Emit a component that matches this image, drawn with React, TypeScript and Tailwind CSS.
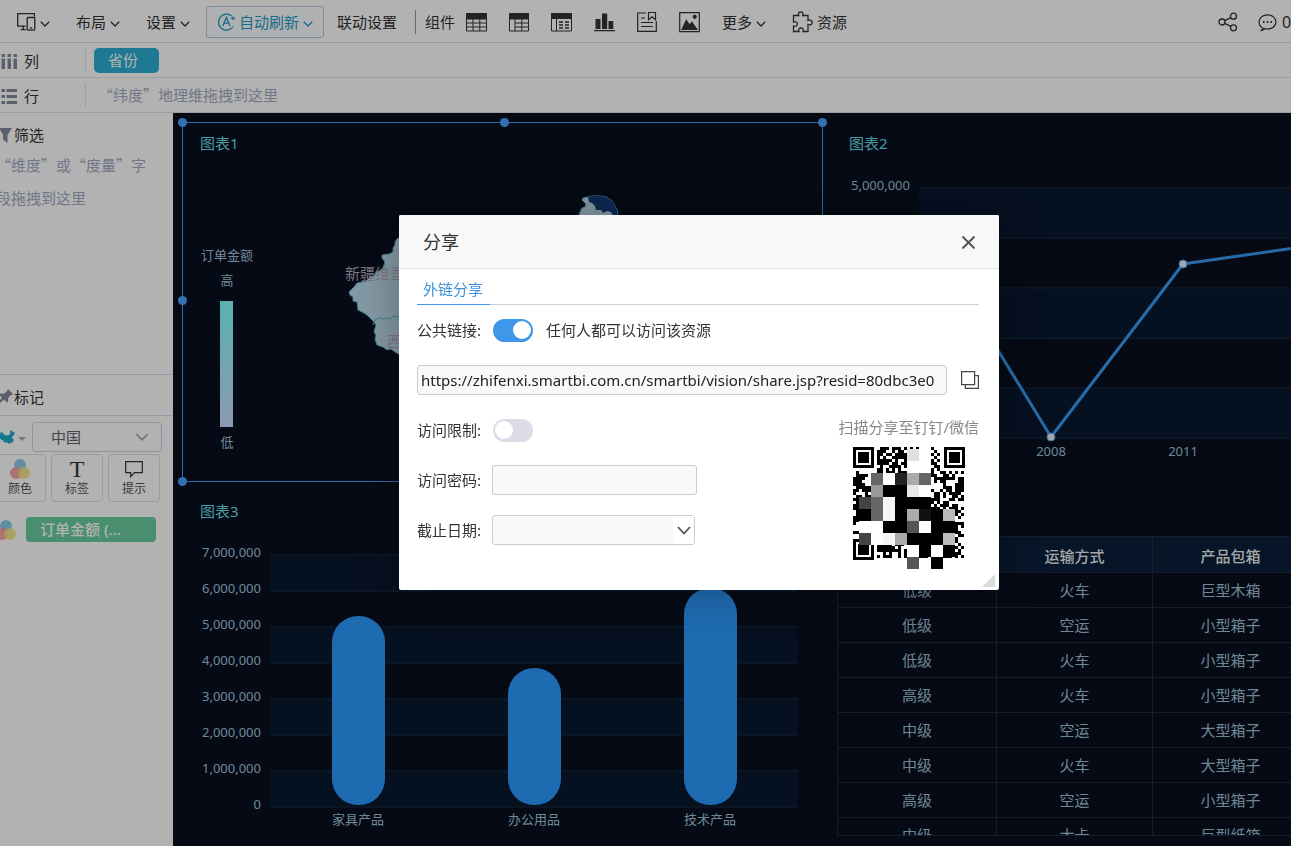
import React from 'react';

const gridRows = [
  ['低级', '火车', '巨型木箱'],
  ['低级', '空运', '小型箱子'],
  ['低级', '火车', '小型箱子'],
  ['高级', '火车', '小型箱子'],
  ['中级', '空运', '大型箱子'],
  ['中级', '火车', '大型箱子'],
  ['高级', '空运', '小型箱子'],
  ['中级', '大卡', '巨型纸箱'],
];

const bars = [
  { name: '家具产品', x: 149, height: 189 },
  { name: '办公用品', x: 325, height: 137 },
  { name: '技术产品', x: 501, height: 217 },
];

const Chevron: React.FC<{ className?: string }> = ({ className = 'h-[6px] w-[10px]' }) => (
  <svg className={className} viewBox="0 0 10 6" fill="none" stroke="currentColor" strokeWidth="1.300" aria-hidden="true">
    <path d="M0.800 0.800 5 5l4.200-4.200" />
  </svg>
);

const ToolMenu: React.FC<{ label: string }> = ({ label }) => (
  <button className="flex items-center gap-1">
    {label}
    <Chevron className="mt-1 h-[6px] w-[10px]" />
  </button>
);

const Swatches: React.FC<{ className?: string }> = ({ className = '' }) => (
  <svg className={className} viewBox="0 0 20 20" aria-hidden="true">
    <circle cx="10" cy="6" r="6" fill="#8ccbe9" />
    <circle cx="6" cy="14" r="6" fill="#f59a9a" fillOpacity="0.9" />
    <circle cx="14" cy="14" r="6" fill="#f0e07c" fillOpacity="0.85" />
  </svg>
);

const Toolbar: React.FC = () => (
  <header className="flex h-[43px] shrink-0 items-center border-b border-[#dcdcdc] pt-[2px] text-[15px] leading-5 whitespace-nowrap text-[#333]">
    <div className="flex items-center gap-[26px] pl-4">
      <button className="flex items-center gap-1" aria-label="设备">
        <svg className="h-5 w-5" viewBox="0 0 20 20" fill="none" stroke="currentColor" strokeWidth="1.300">
          <path d="M18.400 4.500V1.700H1.700v12.400h8M4.500 17.600h5.200M7.300 14.100v3.500" />
          <rect x="11.200" y="5.500" width="7.600" height="12.600" rx="0.800" />
          <path d="M13.800 16h2.400" />
        </svg>
        <Chevron className="mt-1 h-[6px] w-[10px]" />
      </button>
      <ToolMenu label="布局" />
      <ToolMenu label="设置" />
    </div>
    <button className="ml-4 flex h-8 items-center rounded-[3px] border border-[#b4c8dc] bg-[#fafcff] px-[10px] text-[#1f9dc4]">
      <svg className="mr-[3px] h-[19px] w-[19px]" viewBox="0 0 19 19" fill="none" stroke="currentColor" strokeWidth="1.300" aria-hidden="true">
        <path d="M14.600 3A8 8 0 1 0 16.200 13.500" />
        <path d="M14 5.200h4M16 3.400v3.600" />
        <path d="M5.800 13 9.400 4.500 13 13M7 10.200h4.800" />
      </svg>
      自动刷新
      <Chevron className="mt-1 ml-1 h-[6px] w-[10px]" />
    </button>
    <button className="ml-[13px]">联动设置</button>
    <span className="ml-[18px] h-6 w-px bg-[#999]" />
    <span className="ml-[9px]">组件</span>
    <div className="ml-[11px] flex items-center gap-[22px]">
      <button aria-label="清单表">
        <svg className="h-5 w-[21px]" viewBox="0 0 21 20" fill="none" stroke="currentColor">
          <path d="M0.500 1.500h20v17.500H0.500zM7 7v12M13.800 7v12M0.500 11h20M0.500 15h20" />
          <path d="M0.500 1.500h20V7H0.500z" fill="currentColor" />
        </svg>
      </button>
      <button aria-label="交叉表">
        <svg className="h-5 w-[20px]" viewBox="0 0 20 20" fill="none" stroke="currentColor">
          <path d="M0.500 1.500h19v17.500H0.500zM6 7v12M12.800 7v12M6 11h13.500M6 15h13.500" />
          <path d="M0.500 1.500h19V7H0.500z" fill="currentColor" />
        </svg>
      </button>
      <button aria-label="透视表">
        <svg className="h-5 w-[21px]" viewBox="0 0 21 20" fill="none" stroke="currentColor">
          <path d="M0.500 1.500h20v17.500H0.500zM5.500 7v12" />
          <path d="M0.500 1.500h20V6.500H0.500z" fill="currentColor" />
          <path d="M8 10h4M14 10h4M8 13h4M14 13h4M8 16h4M14 16h4" strokeWidth="1.400" />
        </svg>
      </button>
      <button aria-label="图表">
        <svg className="h-5 w-[21px]" viewBox="0 0 21 20" fill="currentColor">
          <path d="M0 18h21v1.300H0zM1.500 7h5v10H1.500zM8 1.500h5.200V17H8zM14.500 9h4.800v8h-4.800z" />
        </svg>
      </button>
      <button aria-label="文本">
        <svg className="h-[22px] w-[20px]" viewBox="0 0 20 22" fill="none" stroke="currentColor" strokeWidth="1.200">
          <path d="M9 2H0.700v18.300h18.600V10M4 7h4M4 11.500h12M4 15.500h12M11.500 1.500h7v7.300l-3.500-3-3.500 3z" />
        </svg>
      </button>
      <button aria-label="图片">
        <svg className="h-[21px] w-[21px]" viewBox="0 0 21 21" fill="none" stroke="currentColor" strokeWidth="1.200">
          <path d="M0.700 0.700h19.600v19H0.700z" />
          <path d="M3 17.500 7.300 8.500l3.200 4.500 2.500-2.500 4.800 7z" fill="currentColor" />
          <circle cx="15.700" cy="4.800" r="1.500" fill="currentColor" />
        </svg>
      </button>
    </div>
    <div className="ml-[22px] flex items-center gap-[26px]">
      <ToolMenu label="更多" />
      <button className="flex items-center gap-1">
        <svg className="h-[22px] w-[21px]" viewBox="0 0 21 22" fill="none" stroke="currentColor" strokeWidth="1.300" aria-hidden="true">
          <path d="M1.500 4.500h5.300c-1-2 0-3.700 1.900-3.700s2.900 1.700 1.900 3.700h5.400v5c2-1 4.200 0 4.200 2s-2.200 3-4.200 2v7h-5c1-2-0.200-3.500-2-3.500s-3 1.500-2 3.500H1.500v-5.500c2.200 0.800 3.800-0.200 3.800-2s-1.600-2.800-3.800-2z" />
        </svg>
        资源
      </button>
    </div>
    <div className="-mr-[7px] ml-auto flex items-center gap-5 pl-4">
      <button aria-label="分享">
        <svg className="h-5 w-5" viewBox="0 0 20 20" fill="none" stroke="currentColor" strokeWidth="1.300">
          <circle cx="4" cy="10" r="3" />
          <circle cx="15.500" cy="4.200" r="3" />
          <circle cx="15.500" cy="15.800" r="3" />
          <path d="m6.700 8.700 6.100-3.100M6.700 11.300l6.100 3.100" />
        </svg>
      </button>
      <button className="flex items-center gap-[5px]">
        <svg className="h-[19px] w-[19px]" viewBox="0 0 19 19" fill="none" stroke="currentColor" strokeWidth="1.200" aria-hidden="true">
          <path d="M5 15.200C2.300 13.900 1 11.500 1 9c0-4 3.800-7.200 8.500-7.200S18 5 18 9s-3.800 7-8.500 7c-1 0-1.800-0.100-2.700-0.300-1.200 1.200-2.400 1.700-4.200 1.900 1.300-0.600 2-1.300 2.400-2.400z" />
          <path d="M5 9h1.500M8.800 9h1.500M12.500 9h1.500" strokeWidth="1.800" />
        </svg>
        <span className="w-4 text-left text-base">0</span>
      </button>
    </div>
  </header>
);

const Shelves: React.FC = () => (
  <section className="shrink-0 text-[15px] leading-5 text-[#333]">
    <div className="flex h-[35px] items-center border-b border-[#e4e4e4]">
      <div className="flex h-6 w-[86px] items-center gap-[6px] border-r border-[#dfe3e8] pt-[2px]">
        <svg className="h-[17px] w-[18px] text-[#858a99]" viewBox="0 0 18 17" fill="currentColor" aria-hidden="true">
          <path d="M1.500 1h3.500v3H1.500zM1.500 5.500h3.500V16H1.500zM7.500 1h3.500v3H7.500zM7.500 5.500h3.500V16H7.500zM13.500 1h3.500v3h-3.500zM13.500 5.500h3.500V16h-3.500z" />
        </svg>
        列
      </div>
      <span className="ml-2 h-[25px] w-[65px] rounded-[5px] bg-[#2caed3] pl-[14px] leading-[25px] text-white">省份</span>
    </div>
    <div className="flex h-[35px] items-center border-b border-[#e4e4e4]">
      <div className="flex h-6 w-[86px] items-center gap-[6px] border-r border-[#dfe3e8] pt-[2px]">
        <svg className="h-[17px] w-[18px] text-[#858a99]" viewBox="0 0 18 17" fill="currentColor" aria-hidden="true">
          <path d="M1.500 1h3.500v3H1.500zM6.500 1H17v3H6.500zM1.500 7h3.500v3H1.500zM6.500 7H17v3H6.500zM1.500 13h3.500v3H1.500zM6.500 13H17v3H6.500z" />
        </svg>
        行
      </div>
      <span className="ml-3 font-['Noto_Sans_CJK_SC',sans-serif] text-[#a3aac3]">“纬度”地理维拖拽到这里</span>
    </div>
  </section>
);

const MarkButton: React.FC<{ label: string; children: React.ReactNode }> = ({ label, children }) => (
  <button className="flex h-12 w-[52px] shrink-0 flex-col items-center rounded border border-[#dcdfe6] pt-1 text-xs leading-5 text-[#555]">
    <span className="flex h-5 items-center justify-center">{children}</span>
    {label}
  </button>
);

const Sidebar: React.FC = () => (
  <aside className="flex w-[173px] shrink-0 flex-col overflow-hidden text-[15px] text-[#333]">
    <section className="h-[262px] border-b border-[#dcdfe6] pt-3">
      <h2 className="flex items-center gap-[2px] leading-5">
        <svg className="h-[15px] w-3 text-[#858a99]" viewBox="0 0 12 15" fill="currentColor" aria-hidden="true">
          <path d="M0 0h12L7.500 7v8L3 11.500V7L-1 0z" />
        </svg>
        筛选
      </h2>
      <p className="mt-[3px] -ml-1 w-[154px] font-['Noto_Sans_CJK_SC',sans-serif] leading-[33px] text-[#a3aac3]">
        “维度”或“度量”字段拖拽到这里
      </p>
    </section>
    <h2 className="flex h-[41px] items-center gap-px border-b border-[#dcdfe6] pt-1">
      <svg className="h-4 w-[13px] text-[#858a99]" viewBox="0 0 13 16" fill="currentColor" aria-hidden="true">
        <path d="m8 0 5 5-1.500 1-1 0.200-2.500 3 0.300 3L7 13.500 4 10.600 0 14v-3l2-2.500L-1 6l1.500-1.500 3.500 0.200L7 2z" />
      </svg>
      标记
    </h2>
    <div className="flex items-center pt-[6px]">
      <button className="flex w-8 items-center gap-[3px]" aria-label="地图类型">
        <svg className="h-[14px] w-[15px]" viewBox="0 0 15 14" fill="#1fa9cf" aria-hidden="true">
          <path d="M0 3 2 2l2 2.500 2.500 1L9 5l1.500-1.500L10 1l2-1 0.500 2L15 2.500l-1 2.500-2 1.500 0.500 2 1.500 1.500-1.500 2.500-2.500 0.500-1 1-1.500-1.500-3 0-2-2.500L0 9z" />
        </svg>
        <span className="mt-1 border-x-4 border-t-4 border-x-transparent border-t-[#aaa]" />
      </button>
      <div className="relative w-[130px]">
        <select aria-label="地图区域" className="h-[30px] w-full appearance-none rounded border border-[#cfd3dc] bg-transparent pl-[18px] text-[#606266]">
          <option>中国</option>
        </select>
        <Chevron className="pointer-events-none absolute top-[11px] right-[13px] h-2 w-[14px] text-[#a8abb2]" />
      </div>
    </div>
    <div className="-ml-[6px] flex gap-[5px] pt-[2px]">
      <MarkButton label="颜色">
        <Swatches className="h-5 w-5" />
      </MarkButton>
      <MarkButton label="标签">
        <span className="font-['Liberation_Serif',serif] text-2xl leading-5 text-[#333]">T</span>
      </MarkButton>
      <MarkButton label="提示">
        <svg className="h-[18px] w-[18px] text-[#333]" viewBox="0 0 18 18" fill="none" stroke="currentColor" strokeWidth="1.200" aria-hidden="true">
          <path d="M0.700 1.700h16.600v11H9.500l-3.800 4v-4h-5z" />
        </svg>
      </MarkButton>
    </div>
    <div className="-ml-1 flex items-center gap-[10px] pt-[15px]">
      <Swatches className="h-5 w-5" />
      <span className="h-[25px] w-[130px] rounded bg-[#67cca0] pl-[14px] leading-[25px] font-medium text-white">订单金额 (...</span>
    </div>
  </aside>
);

const Panel: React.FC<{ title: string; selected?: boolean; children: React.ReactNode }> = ({ title, selected, children }) => (
  <article className={selected ? 'relative border border-[#4397f5]' : 'border border-transparent'}>
    <h3 className="h-[30px] px-[17px] pt-[10px] text-[15px] leading-5 text-[#69dde3]">{title}</h3>
    {children}
    {selected && (
      <>
        <i className="absolute -top-[5px] -left-[5px] h-[9px] w-[9px] rounded-full bg-[#4da3ff]" />
        <i className="absolute -top-[5px] left-[317px] h-[9px] w-[9px] rounded-full bg-[#4da3ff]" />
        <i className="absolute -top-[5px] -right-[5px] h-[9px] w-[9px] rounded-full bg-[#4da3ff]" />
        <i className="absolute top-[173px] -left-[5px] h-[9px] w-[9px] rounded-full bg-[#4da3ff]" />
        <i className="absolute -bottom-[5px] -left-[5px] h-[9px] w-[9px] rounded-full bg-[#4da3ff]" />
      </>
    )}
  </article>
);

const MapChart: React.FC = () => (
  <svg className="h-[320px] w-full text-[13px]" fill="#a0c3da">
    <defs>
      <linearGradient id="legend" x1="0" y1="0" x2="0" y2="1">
        <stop offset="0" stopColor="#81fffb" />
        <stop offset="1" stopColor="#c8dcff" />
      </linearGradient>
    </defs>
    <text x="18" y="107">订单金额</text>
    <text x="44" y="132" textAnchor="middle">高</text>
    <rect x="37" y="148" width="13" height="126" fill="url(#legend)" />
    <text x="44" y="294" textAnchor="middle">低</text>
    <g stroke="#5fb4d4" strokeLinejoin="round">
      <path
        fill="#bcdcec"
        d="M218 84l-4 2-2 3 0 3-2 3 0 4-4 2-7 1 0 3 3 4-2 6-4 3-3 1-2 4-4 1-4 4-9 2-3 4-5 5 1 3 3 2 0 4 4 1 1 8 6 3 4 3 5 5 3 4-1 3-1 4 2 3-1 4 2 6 6 2 4 3 4-1 4 3 5 3 40 24 60 6 70-30 30-50-10-60-80-20z"
      />
      <path fill="none" d="m190 172 2-5 4-2 4 1 4-1 3 1 3-3 4 1 4-1 30 6" />
      <path fill="#bcdcec" d="M393 84l2-16 1-6 1-3 2-4 3-1 1-3-4-4 1-2 5-1 4-1h8l6 1 5 3 3 4 3 6 1 6v21z" />
      <path fill="#123c78" stroke="none" d="m405 44 4-1h8l6 1 5 3 3 4 3 6 1 8-3 2-4-8-4-1-4 2-2-3-5 0-1-4-3-3-3-1z" />
    </g>
    <g fill="#b7a8bd" className="text-[15px]">
      <text x="162" y="126">新疆维吾尔自治区</text>
      <text x="204" y="194">西藏自治区</text>
    </g>
  </svg>
);

const LineChart: React.FC = () => (
  <svg className="h-[320px] w-full text-[13px]" fill="#a0c3da">
    {[35, 135, 235].map((y) => (
      <rect key={y} x="87" y={y} width="560" height="50" fill="#08172f" />
    ))}
    {[35, 85, 135, 185, 235, 285].map((y) => (
      <rect key={y} x="87" y={y - 1} width="560" height="2" fill="#0f2036" />
    ))}
    <polyline points="87,68 219,284 351,111 483,92" fill="none" stroke="#389bf2" strokeWidth="3" strokeLinejoin="round" />
    {[[219, 284], [351, 111]].map(([x, y]) => (
      <circle key={x} cx={x} cy={y} r="4" fill="#e6f3ff" stroke="#5fa4e0" />
    ))}
    <text x="78" y="37" textAnchor="end">5,000,000</text>
    <text x="219" y="303" textAnchor="middle">2008</text>
    <text x="351" y="303" textAnchor="middle">2011</text>
  </svg>
);

const BarChart: React.FC = () => (
  <svg className="h-[320px] w-full text-[13px]" fill="#a0c3da">
    {[0, 2, 4, 6].map((i) => (
      <rect key={i} x="87" y={34 + i * 36} width="527" height="36" fill="#08172f" />
    ))}
    {[7, 6, 5, 4, 3, 2, 1, 0].map((n, i) => (
      <g key={n}>
        <rect x="87" y={33 + i * 36} width="527" height="2" fill="#0f2036" />
        <text x="78" y={36 + i * 36} textAnchor="end">{n ? `${n},000,000` : '0'}</text>
      </g>
    ))}
    {bars.map((bar) => (
      <g key={bar.name}>
        <rect x={bar.x} y={284 - bar.height} width="53" height={bar.height} rx="26" fill="#2c9aff" />
        <text x={bar.x + 26} y="303" textAnchor="middle">{bar.name}</text>
      </g>
    ))}
  </svg>
);

const DataGrid: React.FC = () => (
  <div className="mt-[15px] ml-[5px] h-[300px] w-[472px] overflow-hidden border-b border-[#1d2b3f]">
    <table className="w-full table-fixed border-collapse text-center text-[15px] leading-5 text-[#a0c0d4]">
      <thead className="bg-[#091f3a] text-[#f0f0f0]">
        <tr className="h-9">
          <th className="w-[159px] border border-[#1d2b3f] font-medium">订单等级</th>
          <th className="border border-[#1d2b3f] pt-[2px] font-medium">运输方式</th>
          <th className="border border-[#1d2b3f] pt-[2px] font-medium">产品包箱</th>
        </tr>
      </thead>
      <tbody>
        {gridRows.map((row, i) => (
          <tr key={i} className="h-[35px]">
            {row.map((cell, j) => (
              <td key={j} className="border border-[#1d2b3f]">{cell}</td>
            ))}
          </tr>
        ))}
      </tbody>
    </table>
  </div>
);

const QR_SIZE = 37;

const inFinder = (x: number, y: number) => (x < 8 && y < 8) || (x > 28 && y < 8) || (x < 8 && y > 28);

const qrCells = Array.from({ length: QR_SIZE * QR_SIZE }, (_, i) => [i % QR_SIZE, Math.floor(i / QR_SIZE)]).filter(
  ([x, y]) => !inFinder(x, y) && Math.abs(Math.sin(x * 12.9898 + y * 78.233) * 43758.5453) % 1 < 0.58,
);

// [column, row, fill] of the pixelated blocks laid over the code
const mosaic: [number, number, string][] = [
  [4, 0, '#e0e0e0'], [5, 0, '#fff'],
  [4, 1, '#fff'], [5, 1, '#fff'],
  [1, 2, '#666'], [2, 2, '#fff'], [3, 2, '#222'], [4, 2, '#aaa'], [5, 2, '#666'],
  [1, 3, '#999'], [2, 3, '#000'], [3, 3, '#000'], [4, 3, '#e8e8e8'], [5, 3, '#fff'],
  [0, 4, '#444'], [1, 4, '#666'], [2, 4, '#f5f5f5'], [3, 4, '#000'], [4, 4, '#000'], [5, 4, '#000'],
  [0, 5, '#000'], [1, 5, '#666'], [2, 5, '#f5f5f5'], [3, 5, '#000'], [4, 5, '#aaa'], [5, 5, '#111'], [6, 5, '#000'], [7, 5, '#bbb'],
  [0, 6, '#fff'], [1, 6, '#fff'], [2, 6, '#000'], [3, 6, '#000'], [4, 6, '#555'], [5, 6, '#fff'], [6, 6, '#000'], [7, 6, '#000'],
  [0, 7, '#444'], [1, 7, '#fff'], [2, 7, '#f5f5f5'], [3, 7, '#aaa'], [4, 7, '#000'], [5, 7, '#000'], [6, 7, '#000'], [7, 7, '#bbb'],
  [4, 8, '#fff'], [5, 8, '#000'], [6, 8, '#fff'], [7, 8, '#000'],
  [4, 9, '#555'], [6, 9, '#000'],
];

const QrCode: React.FC = () => (
  <svg className="h-[123px] w-[112px]" viewBox="0 0 112 123" shapeRendering="crispEdges" role="img" aria-label="分享二维码">
    {qrCells.map(([x, y]) => (
      <rect key={`${x}-${y}`} x={x * 3} y={y * 3} width="3" height="3" />
    ))}
    {[[0, 0], [91, 0], [0, 92]].map(([x, y]) => (
      <g key={`${x}-${y}`} transform={`translate(${x} ${y})`}>
        <path d="M0 0h21v21H0z" />
        <path d="M3 3h15v15H3z" fill="#fff" />
        <path d="M5 5h11v11H5z" />
      </g>
    ))}
    {mosaic.map(([col, row, fill]) => (
      <rect key={`${col}-${row}`} x={6 + col * 12} y={2 + row * 12} width="12" height="12" fill={fill} />
    ))}
  </svg>
);

const Switch: React.FC<{ id: string; defaultChecked?: boolean }> = ({ id, defaultChecked }) => (
  <input
    id={id}
    type="checkbox"
    role="switch"
    defaultChecked={defaultChecked}
    className="flex h-[23px] w-10 appearance-none items-center rounded-full bg-[#dcdce6] px-[2px] before:h-[18px] before:w-[18px] before:rounded-full before:bg-white checked:justify-end checked:bg-[#3e97e8]"
  />
);

const ShareDialog: React.FC = () => (
  <div className="fixed inset-0 flex items-start justify-center bg-black/30 pt-[215px] pl-[107px]">
    <section
      role="dialog"
      aria-labelledby="share-title"
      className="relative w-[600px] rounded-[2px] bg-white pb-5 text-[15px] leading-5 text-[#333] shadow-[0_0_50px_rgba(0,0,0,0.3)]"
    >
      <header className="flex h-[54px] items-center justify-between rounded-t-[2px] border-b border-[#e6e6e6] bg-[#f8f8f8] px-6">
        <h2 id="share-title" className="text-lg leading-6">分享</h2>
        <button aria-label="关闭" className="pt-[2px]">
          <svg className="h-[13px] w-[13px]" viewBox="0 0 13 13" stroke="#555" strokeWidth="2">
            <path d="m0.500 0.500 12 12M12.500 0.500l-12 12" />
          </svg>
        </button>
      </header>
      <div className="pr-5 pl-[18px]">
        <div className="flex border-b border-[#d0d0d0]">
          <button className="-mb-px h-9 border-b border-[#3e97e8] pt-[5px] pr-[7px] pl-[6px] text-[#3e90dd]">外链分享</button>
        </div>
        <div className="mt-[11px] flex h-7 items-center">
          <label htmlFor="public-link" className="w-[76px]">公共链接:</label>
          <Switch id="public-link" defaultChecked />
          <span className="ml-[13px]">任何人都可以访问该资源</span>
        </div>
        <div className="mt-[21px] flex items-center gap-[14px]">
          <input
            aria-label="链接地址"
            readOnly
            value="https://zhifenxi.smartbi.com.cn/smartbi/vision/share.jsp?resid=80dbc3e0"
            className="h-[30px] min-w-0 flex-1 rounded-[3px] border border-[#ccc] bg-[#f9f9f9] px-[3px] text-[15px] text-[#222]"
          />
          <button aria-label="复制链接">
            <svg className="h-[18px] w-[18px]" viewBox="0 0 18 18" fill="none" stroke="#444" strokeWidth="1.200">
              <path d="M0.600 0.600h13v13h-13zM14 4.600h3.400v12.800h-13V14" />
            </svg>
          </button>
        </div>
        <div className="mt-5 flex items-start justify-between">
          <div className="flex flex-col gap-5">
            <div className="flex h-[30px] items-center">
              <label htmlFor="limit" className="w-[76px]">访问限制:</label>
              <Switch id="limit" />
            </div>
            <div className="flex h-[30px] items-center">
              <label htmlFor="password" className="w-[75px]">访问密码:</label>
              <input id="password" className="h-[30px] w-[205px] rounded-[3px] border border-[#ccc] bg-[#f9f9f9] px-1" />
            </div>
            <div className="flex h-[30px] items-center">
              <label htmlFor="deadline" className="w-[75px]">截止日期:</label>
              <div className="relative">
                <select id="deadline" className="h-[30px] w-[203px] appearance-none rounded-[3px] border border-[#ccc] bg-[#f9f9f9]">
                  <option value="" />
                </select>
                <span className="pointer-events-none absolute inset-y-px right-px flex w-[21px] items-center justify-center bg-white">
                  <svg className="h-[9px] w-[14px]" viewBox="0 0 14 9" fill="none" stroke="#555" strokeWidth="1.800" aria-hidden="true">
                    <path d="m1 1 6 6.500L13 1" />
                  </svg>
                </span>
              </div>
            </div>
          </div>
          <div className="flex flex-col items-center gap-[10px] pt-[2px] text-[#888]">
            扫描分享至钉钉/微信
            <QrCode />
          </div>
        </div>
      </div>
      <svg className="absolute right-1 bottom-[3px] h-[13px] w-[13px]" viewBox="0 0 13 13" fill="#dcdcdc" aria-hidden="true">
        <path d="M13 0v13H0z" />
      </svg>
    </section>
  </div>
);

const App: React.FC = () => (
  <div className="flex h-screen flex-col overflow-hidden bg-white font-['Noto_Sans','Noto_Sans_CJK_SC',sans-serif]" lang="zh-CN">
    <Toolbar />
    <Shelves />
    <div className="flex min-h-0 flex-1">
      <Sidebar />
      <main className="grid min-w-0 flex-1 grid-cols-[repeat(2,minmax(641px,1fr))] grid-rows-[360px_auto] content-start gap-2 overflow-hidden bg-[#080f1f] pt-[9px] pl-[9px]">
        <Panel title="图表1" selected>
          <MapChart />
        </Panel>
        <Panel title="图表2">
          <LineChart />
        </Panel>
        <Panel title="图表3">
          <BarChart />
        </Panel>
        <Panel title="图表4">
          <DataGrid />
        </Panel>
      </main>
    </div>
    <ShareDialog />
  </div>
);

export default App;
